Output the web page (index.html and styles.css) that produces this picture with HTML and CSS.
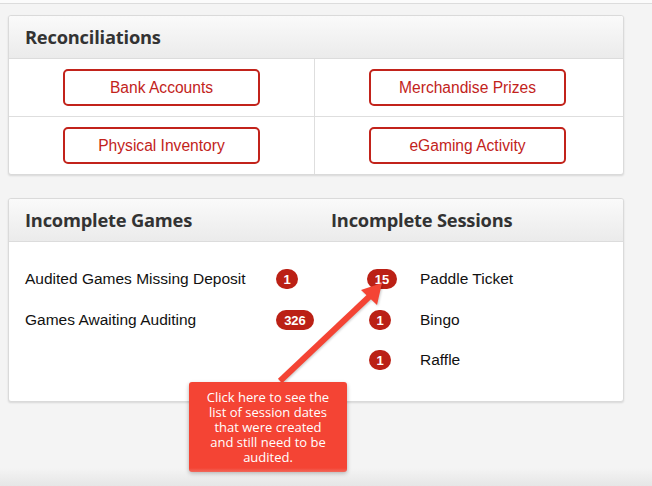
FILE: index.html
```html
<!DOCTYPE html>
<html>
<head>
<meta charset="utf-8">
<link rel="stylesheet" href="styles.css">
</head>
<body>
<div class="topbar"></div>
<main class="content">
  <section class="panel">
    <header class="panel-head"><h2>Reconciliations</h2></header>
    <div class="recon-grid">
      <div class="cell"><a class="btn">Bank Accounts</a></div>
      <div class="cell"><a class="btn">Merchandise Prizes</a></div>
      <div class="cell"><a class="btn">Physical Inventory</a></div>
      <div class="cell"><a class="btn">eGaming Activity</a></div>
    </div>
  </section>

  <section class="panel panel-incomplete">
    <header class="panel-head two">
      <h2>Incomplete Games</h2>
      <h2>Incomplete Sessions</h2>
    </header>
    <div class="inc-body">
      <div class="inc-col games">
        <div class="row"><span class="label">Audited Games Missing Deposit</span><span class="badge">1</span></div>
        <div class="row"><span class="label">Games Awaiting Auditing</span><span class="badge wide">326</span></div>
      </div>
      <div class="inc-col sessions">
        <div class="row"><span class="badge">15</span><span class="label">Paddle Ticket</span></div>
        <div class="row"><span class="badge">1</span><span class="label">Bingo</span></div>
        <div class="row"><span class="badge">1</span><span class="label">Raffle</span></div>
      </div>
    </div>
  </section>

  <svg class="arrow" width="652" height="486" viewBox="0 0 652 486">
    <line x1="280" y1="381" x2="370" y2="296" stroke="#f44434" stroke-width="6" stroke-linecap="butt"/>
    <polygon points="382,283 361,290 377,305" fill="#f44434"/>
  </svg>
  <div class="tooltip">Click here to see the list of session dates that were created and still need to be audited.</div>
</main>
<div class="bottom-fade"></div>
</body>
</html>
```
FILE: styles.css
```css
html, body {
  margin: 0;
  padding: 0;
}
body {
  background: #f4f4f4;
  width: 652px;
  height: 486px;
  overflow: hidden;
  position: relative;
  font-family: "Liberation Sans", Arial, sans-serif;
  color: #111;
}
.topbar {
  height: 3px;
  background: #fbfbfb;
  border-bottom: 1px solid #dcdcdc;
}
.content {
  padding: 11px 0 0 8px;
  width: 616px;
}
.panel {
  background: #fff;
  border: 1px solid #dadada;
  border-radius: 3px;
  box-shadow: 0 1px 2px rgba(0,0,0,0.12);
  overflow: hidden;
}
.panel-head {
  height: 42px;
  background: linear-gradient(#fafafa, #ebebeb);
  border-bottom: 1px solid #dcdcdc;
  display: flex;
  align-items: center;
  padding-left: 16px;
}
.panel-head h2 {
  margin: 0;
  font-family: "Open Sans", sans-serif;
  font-weight: 700;
  font-size: 18.3px;
  letter-spacing: -0.2px;
  color: #333;
  flex-shrink: 0;
  margin-top: -1px;
}
.panel-head.two h2 {
  width: 306px;
}
.recon-grid {
  display: grid;
  grid-template-columns: 306px 1fr;
}
.cell {
  height: 57px;
  display: flex;
  align-items: center;
  justify-content: center;
  border-bottom: 1px solid #dedede;
}
.cell:nth-child(odd) {
  border-right: 1px solid #dedede;
}
.cell:nth-child(even) {
  padding-right: 3px;
}
.cell:nth-child(n+3) {
  border-bottom: none;
}
.btn {
  box-sizing: border-box;
  width: 197px;
  height: 37px;
  border: 2px solid #c2231b;
  border-radius: 5px;
  color: #c2231b;
  font-size: 15.6px;
  display: flex;
  align-items: center;
  justify-content: center;
}
.panel-incomplete {
  margin-top: 23px;
  height: 204px;
  box-sizing: border-box;
}
.inc-body {
  display: flex;
  padding: 27px 0 0 16px;
}
.inc-col {
  display: flex;
  flex-direction: column;
}
.games {
  width: 342px;
  gap: 21px;
}
.sessions {
  gap: 21px;
}
.sessions .row:nth-child(3) {
  margin-top: -1px;
}
.row {
  display: flex;
  align-items: center;
  height: 20px;
  font-size: 15.5px;
}
.games .label {
  width: 251px;
}
.sessions .badge {
  width: 30px;
  box-sizing: border-box;
  margin-right: 23px;
}
.sessions .row:nth-child(n+2) .badge {
  width: 21px;
  margin-left: 2px;
  margin-right: 29px;
}
.badge {
  display: inline-flex;
  align-items: center;
  justify-content: center;
  min-width: 22px;
  height: 20px;
  padding: 0 6px;
  box-sizing: border-box;
  border-radius: 10px;
  background: #bb2015;
  color: #fff;
  font-weight: 700;
  font-size: 13px;
}
.badge.wide {
  padding: 0 8px;
  width: 38px;
}
.arrow {
  position: absolute;
  left: 0;
  top: 0;
  pointer-events: none;
  filter: drop-shadow(1px 1px 1px rgba(0,0,0,0.2));
}
.tooltip {
  position: absolute;
  left: 189px;
  top: 382px;
  width: 158px;
  height: 90px;
  box-sizing: border-box;
  padding: 8px 14px 0;
  background: #f44434;
  border-radius: 3px;
  box-shadow: 0 2px 4px rgba(0,0,0,0.3);
  color: #fff;
  text-align: center;
  font-family: "Open Sans", sans-serif;
  font-size: 13px;
  line-height: 15px;
}
.bottom-fade {
  position: absolute;
  left: 0;
  right: 0;
  bottom: 0;
  height: 18px;
  background: linear-gradient(rgba(230,230,230,0), #e6e6e6);
}
```
